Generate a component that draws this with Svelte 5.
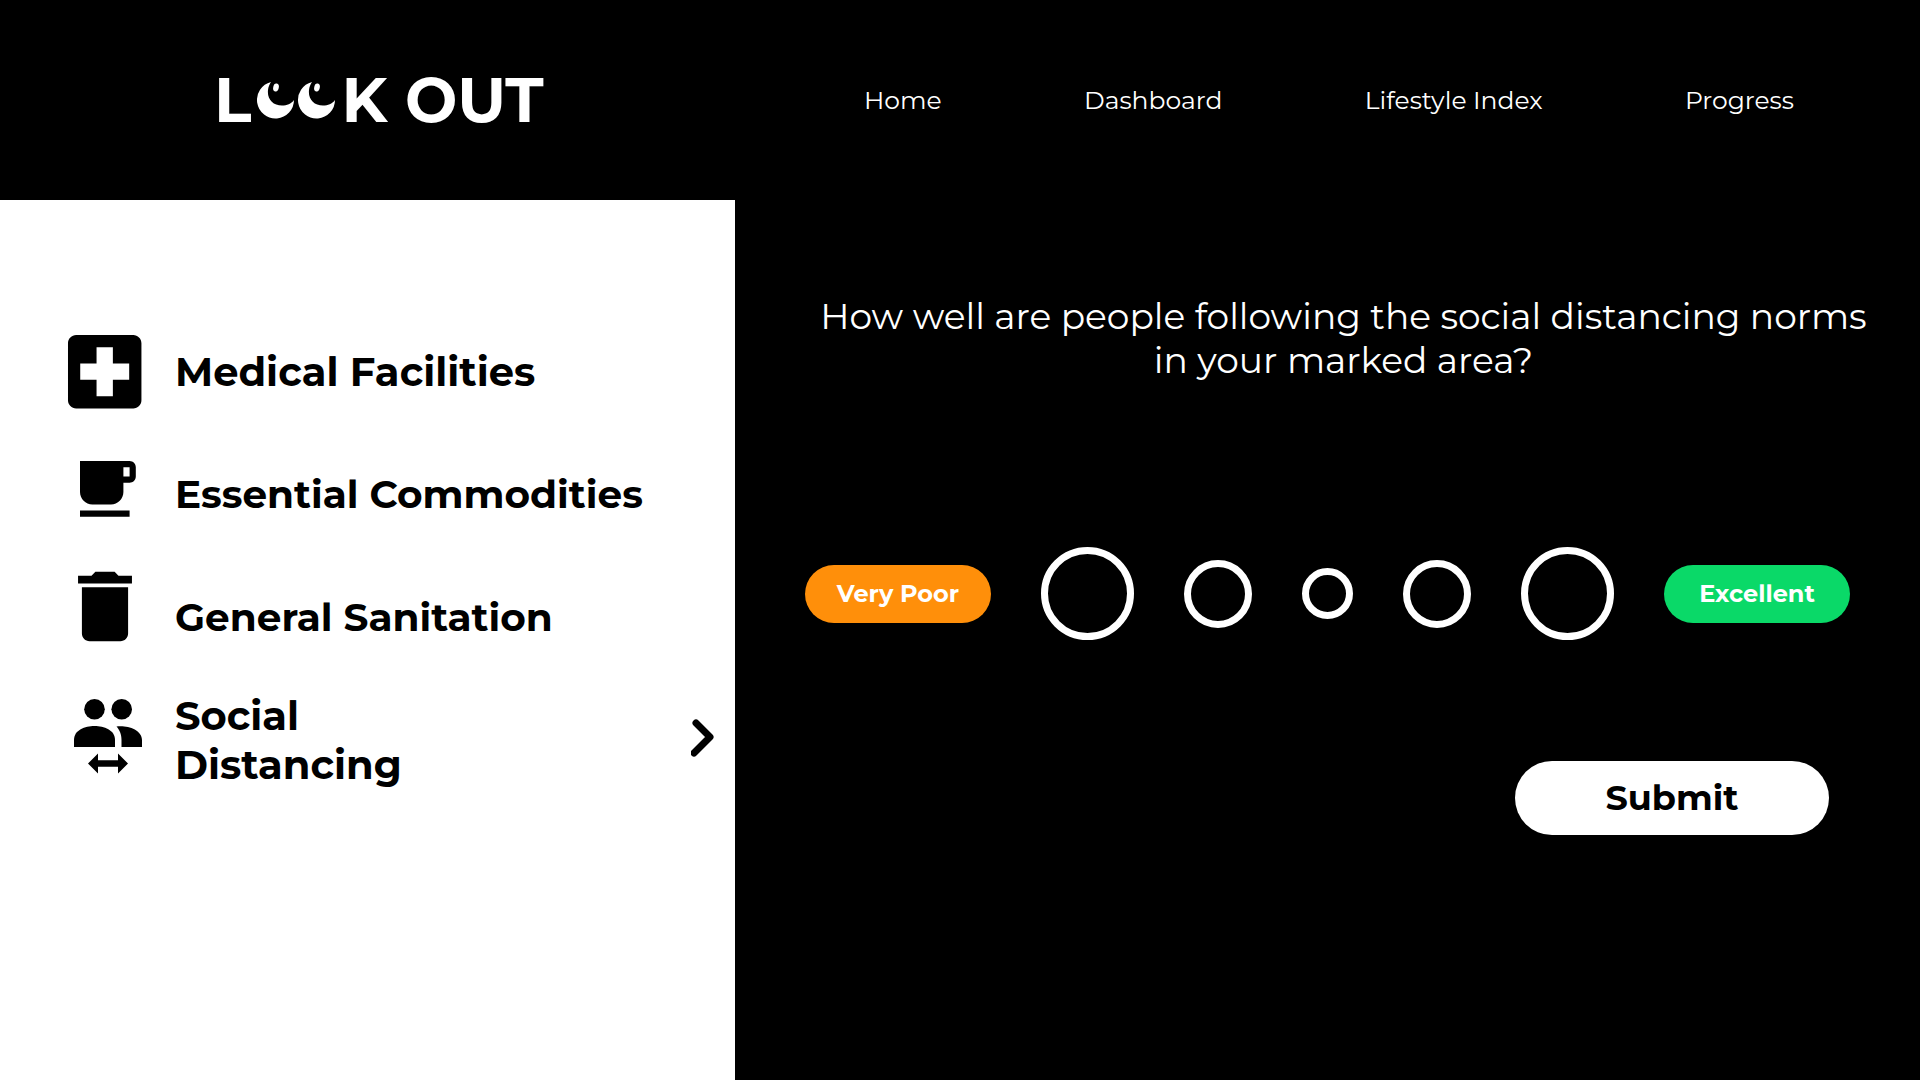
<script>
	const links = ['Home', 'Dashboard', 'Lifestyle Index', 'Progress'];

	const categories = [
		{ id: 'medical', label: 'Medical Facilities' },
		{ id: 'essential', label: 'Essential Commodities' },
		{ id: 'sanitation', label: 'General Sanitation' },
		{ id: 'distancing', label: 'Social Distancing' },
	];

	const ratings = [
		{ value: 1, size: 'large', label: 'Very poor' },
		{ value: 2, size: 'medium', label: 'Poor' },
		{ value: 3, size: 'small', label: 'Average' },
		{ value: 4, size: 'medium', label: 'Good' },
		{ value: 5, size: 'large', label: 'Excellent' },
	];

	let active = $state('distancing');
	let rating = $state(null);

	function submit(event) {
		event.preventDefault();
	}
</script>

<div class="page">
	<header>
		<a class="logo" href="#home" aria-label="Look Out">
			<span>L</span>
			<svg viewBox="0 0 78 37" width="78" height="37" aria-hidden="true">
				{#each [0, 41] as x}
					<g transform="translate({x} 0)" fill="#fff">
						<path d="M14 0A18.500 18.500 0 1 0 37 18C34 22 30 23.500 25 23.500C16 23.500 10 17 11 8C11.300 5 12.500 2 14 0Z" />
						<ellipse cx="19" cy="5.500" rx="2.800" ry="4" transform="rotate(12 19 5.500)" />
					</g>
				{/each}
			</svg>
			<span>K OUT</span>
		</a>
		<nav>
			{#each links as link}
				<a href="#{link.toLowerCase().replace(' ', '-')}">{link}</a>
			{/each}
		</nav>
	</header>

	<div class="content">
		<aside>
			{#each categories as item}
				<button class="category {item.id}" onclick={() => (active = item.id)}>
					<svg class="icon" viewBox="0 0 76 100" width="76" height="100" aria-hidden="true">
						{#if item.id === 'medical'}
							<path transform="translate(-11.250 1.750) scale(4.080)" d="M19 3H5c-1.100 0-2 .9-2 2v14c0 1.100.9 2 2 2h14c1.100 0 2-.9 2-2V5c0-1.100-.9-2-2-2zm-1 11h-4v4h-4v-4H6v-4h4V6h4v4h4v4z" />
						{:else if item.id === 'essential'}
							<path transform="translate(0.600 7.700) scale(3.100)" d="M20 3H4v10c0 2.210 1.790 4 4 4h6c2.210 0 4-1.790 4-4v-3h2c1.110 0 2-.9 2-2V5c0-1.110-.89-2-2-2zm0 5h-2V5h2v3zM4 19h16v2H4z" />
						{:else if item.id === 'sanitation'}
							<path transform="translate(-8.200 -6.700) scale(3.850)" d="M6 19c0 1.100.9 2 2 2h8c1.100 0 2-.9 2-2V7H6v12zM19 4h-3.500l-1-1h-5l-1 1H5v2h14V4z" />
						{:else}
							<g transform="translate(7 9)">
								<circle cx="20.500" cy="10.300" r="10.300" />
								<circle cx="47.700" cy="10.300" r="10.300" />
								<path d="M0 48V41C0 31 11 27 20.500 27S41 31 41 41V48Z" />
								<path d="M42.500 27.500C52 26 68 30 68 41V48H47.500V41C47.500 35 45.500 31 42.500 27.500Z" />
								<path d="M14 64.500L24 54.500V61.200H44V54.500L54 64.500L44 74.500V67.800H24V74.500Z" />
							</g>
						{/if}
					</svg>
					<span class="label">{item.label}</span>
					{#if active === item.id}
						<svg class="chevron" viewBox="0 0 24 42" width="24" height="42" aria-hidden="true">
							<path d="M5 4L19 18L3 34" fill="none" stroke="#000" stroke-width="7" stroke-linecap="round" stroke-linejoin="round" />
						</svg>
					{/if}
				</button>
			{/each}
		</aside>

		<main>
			<form onsubmit={submit}>
				<h1 id="question">How well are people following the social distancing norms in your marked area?</h1>
				<div class="scale" role="radiogroup" aria-labelledby="question">
					<span class="pill poor">Very Poor</span>
					{#each ratings as item}
						<input type="radio" name="rating" class={item.size} value={item.value} aria-label={item.label} bind:group={rating} />
					{/each}
					<span class="pill excellent">Excellent</span>
				</div>
				<button class="submit" type="submit">Submit</button>
			</form>
		</main>
	</div>
</div>

<style>
	:global(body) {
		margin: 0;
		background: #000;
	}

	.page {
		min-height: 100vh;
		display: flex;
		flex-direction: column;
		background: #000;
		color: #fff;
		font-family: Montserrat, Inter, sans-serif;
	}

	header {
		display: flex;
		align-items: center;
		height: 200px;
	}

	a {
		color: inherit;
		text-decoration: none;
	}

	.logo {
		display: flex;
		align-items: center;
		gap: 6px;
		box-sizing: border-box;
		width: 45%;
		padding-left: 214px;
		font-size: 62px;
		font-weight: 700;
		line-height: 64px;
		white-space: nowrap;
	}

	nav {
		flex: 1;
		display: flex;
		justify-content: space-between;
		padding-right: 126px;
		font-size: 25px;
		font-weight: 400;
		line-height: 32px;
	}

	.content {
		flex: 1;
		display: grid;
		grid-template-columns: 49fr 79fr;
	}

	aside {
		display: flex;
		flex-direction: column;
		gap: 23px;
		padding: 121px 20px 0 67px;
		background: #fff;
	}

	button {
		border: none;
		font-family: inherit;
		color: #000;
		cursor: pointer;
	}

	.category {
		display: flex;
		align-items: center;
		width: 100%;
		padding: 0;
		background: none;
		text-align: left;
	}

	.icon {
		flex: none;
		margin-right: 32px;
	}

	.label {
		font-size: 40px;
		font-weight: 700;
		line-height: 49px;
	}

	.essential .label,
	.sanitation .label {
		font-size: 39px;
	}

	.distancing .label {
		width: min-content;
	}

	.chevron {
		margin-left: auto;
	}

	main {
		padding: 94px 42px 0 70px;
	}

	form {
		display: flex;
		flex-direction: column;
	}

	h1 {
		margin: 0;
		padding-left: 4px;
		font-size: 36px;
		font-weight: 400;
		line-height: 44px;
		text-align: center;
	}

	.scale {
		display: flex;
		align-items: center;
		gap: 50px;
		margin-top: 165px;
	}

	.pill {
		width: 186px;
		border-radius: 29px;
		font-size: 24px;
		font-weight: 700;
		line-height: 58px;
		text-align: center;
	}

	.poor {
		background: #ff8f0a;
	}

	.excellent {
		background: #0ad968;
	}

	input {
		appearance: none;
		box-sizing: border-box;
		margin: 0;
		border: 7px solid #fff;
		border-radius: 50%;
		cursor: pointer;
	}

	input:checked {
		background: #fff;
	}

	.large {
		width: 93px;
		height: 93px;
	}

	.medium {
		width: 68px;
		height: 68px;
	}

	.small {
		width: 51px;
		height: 51px;
	}

	.submit {
		align-self: flex-end;
		width: 314px;
		margin: 121px 49px 0 0;
		padding: 0;
		border-radius: 37px;
		background: #fff;
		font-size: 35px;
		font-weight: 700;
		line-height: 74px;
	}
</style>
